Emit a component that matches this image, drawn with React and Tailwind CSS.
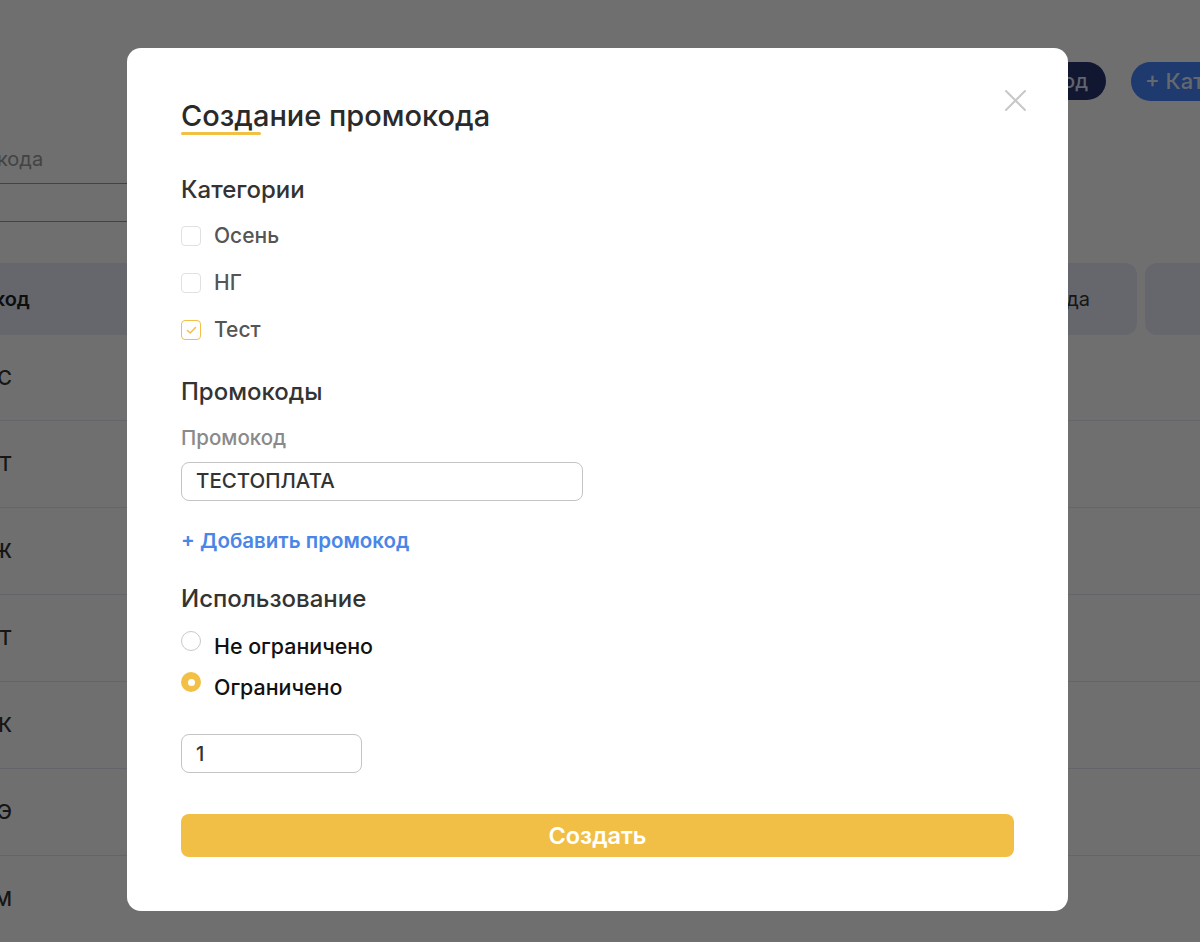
import React from "react";

const rows = ["ЛЕС", "ТЕСТ", "ЁЖ", "ПОЛЁТ", "ЛАК", "ЭЭ", "ДОМ"];

function Checkbox({ checked }) {
  return (
    <span
      className={
        "flex h-[20px] w-[20px] shrink-0 items-center justify-center rounded-[4px] border-[1.5px] bg-white " +
        (checked ? "border-[#f2c045]" : "border-[#e1e1e1]")
      }
    >
      {checked && (
        <svg width="11" height="9" viewBox="0 0 11 9" fill="none">
          <path d="M1.5 4.5 L4.2 7 L9.5 1.5" stroke="#f2c045" strokeWidth="1.6" strokeLinecap="round" strokeLinejoin="round" />
        </svg>
      )}
    </span>
  );
}

function Radio({ checked }) {
  return checked ? (
    <span className="flex h-[20px] w-[20px] shrink-0 items-center justify-center rounded-full bg-[#f2c045]">
      <span className="block h-[7px] w-[7px] rounded-full bg-white" />
    </span>
  ) : (
    <span className="block h-[20px] w-[20px] shrink-0 rounded-full border-[1.5px] border-[#c9c9c9] bg-white" />
  );
}

export default function App() {
  return (
    <div className="relative h-[942px] w-full overflow-hidden bg-white font-['Inter',sans-serif]">
      {/* Background page */}
      <div className="flex flex-col">
        <div className="mr-[-92px] mt-[62px] flex justify-end gap-[25px]">
          <div className="flex h-[38px] items-center rounded-full bg-[#2a3570] px-[18px] text-[20px] font-medium text-[#dfe6ff]">
            + Промокод
          </div>
          <div className="flex h-[39px] items-center rounded-full bg-[#4585fd] px-[14px] text-[22px] font-medium text-[#e6eeff]">
            + Категория
          </div>
        </div>
        <div className="mt-[43px] w-[420px]">
          <div className="ml-[-133px] border-b border-[#9a9a9a] pb-[9px] text-[20px] text-[#9a9a9a]">Поиск промокода</div>
          <div className="h-[38px] border-b border-[#9a9a9a]" />
        </div>
        <div className="mt-[41px] flex h-[72px] gap-[8px]">
          <div className="ml-[-96px] flex w-[560px] items-center rounded-[12px] bg-[#eaedfa] px-[22px] text-[20px] font-semibold text-[#222]">
            Промокод
          </div>
          <div className="flex flex-1 items-center justify-end rounded-[12px] bg-[#eaedfa] pr-[47px] text-[20px] text-[#333]">
            Статус промокода
          </div>
          <div className="mr-[-80px] w-[135px] rounded-[12px] bg-[#eaedfa]" />
        </div>
        {rows.map((r, i) => (
          <div key={i} className={"flex items-center border-b border-[#e4e7f4] " + (i === 0 ? "h-[86px]" : "h-[87px]")}>
            <div className="ml-[-90px] w-[102px] text-right text-[20px] font-medium text-[#333]">{r}</div>
            <div className="ml-[610px] mt-[-2px] h-[26px] w-[40px] rounded-full bg-[#3f7d44]" />
          </div>
        ))}
      </div>

      {/* Overlay */}
      <div className="absolute inset-0 bg-black/[0.565]" />

      {/* Modal */}
      <div className="absolute left-[127px] top-[48px] flex w-[941px] flex-col rounded-[14px] bg-white px-[54px] pb-[54px] pt-[50px]">
        <button className="absolute right-[42px] top-[42px] h-[21px] w-[21px]">
          <svg width="21" height="21" viewBox="0 0 21 21" fill="none">
            <path d="M1 1 L20 20 M20 1 L1 20" stroke="#c8c8c8" strokeWidth="2" strokeLinecap="round" />
          </svg>
        </button>

        <div className="relative self-start text-[29px] font-medium leading-[36px] text-[#2a2a2a]">
          Создание промокода
          <span className="absolute left-0 top-[34px] h-[3px] w-[80px] rounded-full bg-[#f2c045]" />
        </div>

        <div className="mt-[42px] text-[24px] font-medium leading-[28px] text-[#333]">Категории</div>
        <div className="mt-[18px] flex flex-col gap-[19px]">
          {[["Осень", false], ["НГ", false], ["Тест", true]].map(([t, c]) => (
            <label key={t} className="flex h-[28px] items-center gap-[13px]">
              <Checkbox checked={c} />
              <span className="text-[21px] font-medium text-[#555]">{t}</span>
            </label>
          ))}
        </div>

        <div className="mt-[34px] text-[24px] font-medium leading-[28px] text-[#333]">Промокоды</div>
        <div className="mt-[19px] text-[20.5px] font-medium leading-[26px] text-[#8a8a8a]">Промокод</div>
        <div className="mt-[11px] flex h-[39px] w-[402px] items-center rounded-[8px] border-[1.5px] border-[#c4c4c4] px-[14px] text-[20.5px] font-medium text-[#333]">
          ТЕСТОПЛАТА
        </div>
        <div className="mt-[27px] text-[20.5px] font-semibold leading-[26px] text-[#4a86e8]">+ Добавить промокод</div>

        <div className="mt-[31px] text-[24px] font-medium leading-[28px] text-[#333]">Использование</div>
        <div className="mt-[19px] flex flex-col gap-[13px]">
          {[["Не ограничено", false], ["Ограничено", true]].map(([t, c]) => (
            <label key={t} className="flex h-[28px] items-center gap-[13px]">
              <span className="mt-[-10px] flex">
                <Radio checked={c} />
              </span>
              <span className="text-[21.4px] font-medium text-[#111]">{t}</span>
            </label>
          ))}
        </div>

        <div className="mt-[33px] flex h-[39px] w-[181px] items-center rounded-[8px] border-[1.5px] border-[#c4c4c4] px-[14px] text-[20px] font-medium text-[#333]">
          1
        </div>

        <button className="mt-[41px] flex h-[43px] w-full items-center justify-center rounded-[8px] bg-[#f1bf46] text-[23.5px] font-semibold text-white">
          Создать
        </button>
      </div>
    </div>
  );
}
